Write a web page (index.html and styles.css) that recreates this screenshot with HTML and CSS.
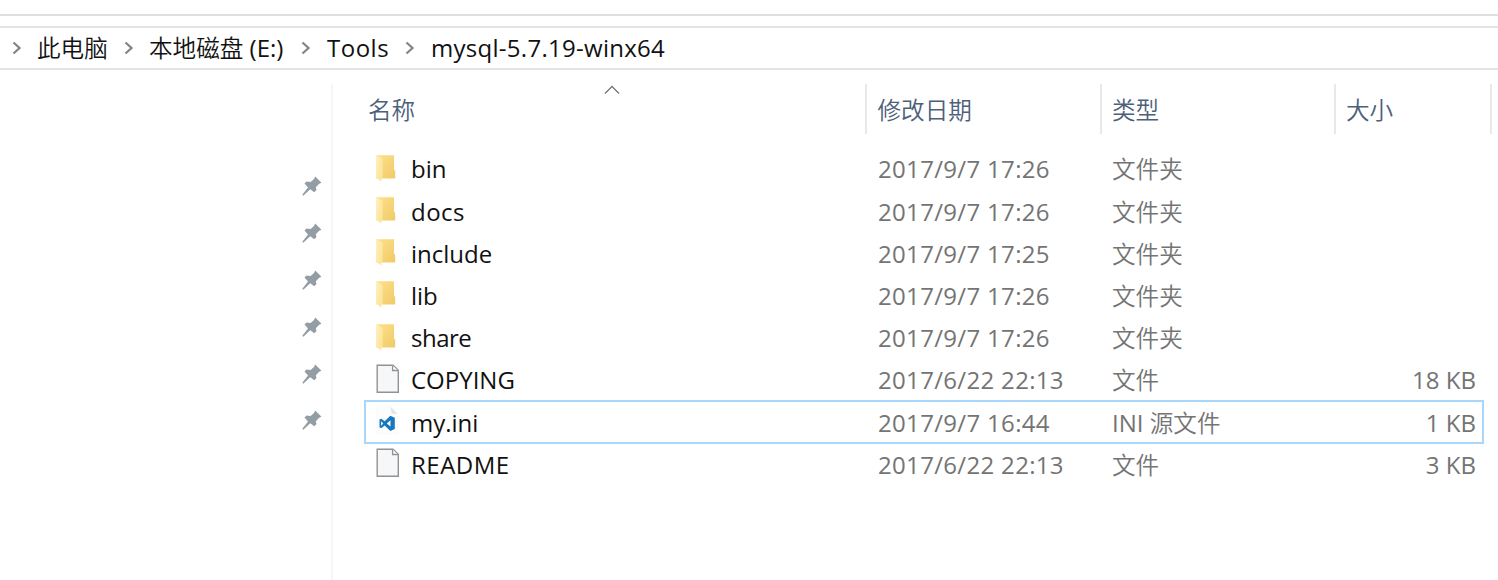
FILE: index.html
```html
<!DOCTYPE html>
<html lang="zh-CN">
<head>
<meta charset="utf-8">
<title>mysql-5.7.19-winx64</title>
<link rel="stylesheet" href="styles.css">
</head>
<body>
<svg width="0" height="0" class="defs">
  <defs>
    <linearGradient id="gold" x1="0" y1="0" x2="1" y2="1"><stop offset="0" stop-color="#ffe08a"/><stop offset="1" stop-color="#efca68"/></linearGradient>
    <linearGradient id="flap" x1="0" y1="0" x2="1" y2="1"><stop offset="0" stop-color="#fff0b8"/><stop offset="1" stop-color="#fce193"/></linearGradient>
    <symbol id="folder" viewBox="0 0 24 30"><path d="M.5 2.200H18V16.500L19.200 18V25.500H.5Z" fill="url(#gold)"/><path d="M.5 2.200L6.700 6V24.500L5.300 25.500V28.500L.5 25Z" fill="url(#flap)"/></symbol>
    <symbol id="file" viewBox="0 0 24 30"><path d="M1.200 1.300H17L22.300 6.300V28.300H1.200Z" fill="#f5f7f8" stroke="#929292" stroke-width="1.4"/><path d="M16.600 1.500V6.500H21.800" fill="#fff" stroke="#929292" stroke-width="1.3"/></symbol>
    <symbol id="code" viewBox="0 0 24 30"><path d="M.7 .7H15L21.500 7.500V28H.7Z" fill="#fdfdfd" stroke="#f8f8f8" stroke-width=".7"/><path d="M14.500 .7L21.500 7.700H15.500Z" fill="#e4e4e4"/><path fill-rule="evenodd" d="M14.300 9.800L18.800 11.700V23L14.300 25L8.700 19.500L5.200 22.200L3.500 21.300V13.500L5.200 12.700L8.700 15.300ZM14.500 14.300L10.800 17.400L14.500 20.500ZM5.100 15.200V19.700L7.200 17.400Z" fill="#1878bd"/></symbol>
    <symbol id="pin" viewBox="0 0 20 20"><path d="M13.200 .5L19.500 6.800L17.200 7.800L13.800 11.300L14.500 14L12.300 16.200L8.200 13.200L1.300 19.700L.3 18.700L6 11.500L2.500 7.500L4.500 5.400L8.700 6L12 2.900Z" fill="#939da4"/></symbol>
    <symbol id="chev" viewBox="0 0 10 14"><path d="M1.500 1.500L7.500 7L1.500 12.500" fill="none" stroke="#858585" stroke-width="2.300"/></symbol>
  </defs>
</svg>
<div class="window">
  <div class="ribbon"></div>
  <nav class="address">
    <svg class="chev"><use href="#chev"/></svg><span class="crumb c1 cjk">此电脑</span>
    <svg class="chev"><use href="#chev"/></svg><span class="crumb c2"><span class="cjk">本地磁盘</span><span class="drive"> (E:)</span></span>
    <svg class="chev"><use href="#chev"/></svg><span class="crumb c3">Tools</span>
    <svg class="chev"><use href="#chev"/></svg><span class="crumb c4">mysql-5.7.19-winx64</span>
  </nav>
  <div class="body">
    <aside class="quick">
      <svg class="pin"><use href="#pin"/></svg><svg class="pin"><use href="#pin"/></svg><svg class="pin"><use href="#pin"/></svg><svg class="pin"><use href="#pin"/></svg><svg class="pin"><use href="#pin"/></svg><svg class="pin"><use href="#pin"/></svg>
    </aside>
    <main class="list">
      <header class="head cjk">
        <span class="col">名称<svg class="sort" viewBox="0 0 16 10"><path d="M1 8.500L8 1.500L15 8.500" fill="none" stroke="#777" stroke-width="1.300"/></svg></span>
        <span class="col">修改日期</span><span class="col">类型</span><span class="col">大小</span>
      </header>
      <div class="row"><svg class="icon"><use href="#folder"/></svg><span class="name">bin</span><span class="date">2017/9/7 17:26</span><span class="cjk">文件夹</span><span class="size"></span></div>
      <div class="row"><svg class="icon"><use href="#folder"/></svg><span class="name wide">docs</span><span class="date">2017/9/7 17:26</span><span class="cjk">文件夹</span><span class="size"></span></div>
      <div class="row"><svg class="icon"><use href="#folder"/></svg><span class="name">include</span><span class="date">2017/9/7 17:25</span><span class="cjk">文件夹</span><span class="size"></span></div>
      <div class="row"><svg class="icon"><use href="#folder"/></svg><span class="name">lib</span><span class="date">2017/9/7 17:26</span><span class="cjk">文件夹</span><span class="size"></span></div>
      <div class="row"><svg class="icon"><use href="#folder"/></svg><span class="name tight">share</span><span class="date">2017/9/7 17:26</span><span class="cjk">文件夹</span><span class="size"></span></div>
      <div class="row"><svg class="icon"><use href="#file"/></svg><span class="name">COPYING</span><span class="date">2017/6/22 22:13</span><span class="cjk">文件</span><span class="size">18 KB</span></div>
      <div class="row focused"><svg class="icon"><use href="#code"/></svg><span class="name">my.ini</span><span class="date">2017/9/7 16:44</span><span><span class="ini">INI </span><span class="cjk">源文件</span></span><span class="size">1 KB</span></div>
      <div class="row"><svg class="icon"><use href="#file"/></svg><span class="name wide">README</span><span class="date">2017/6/22 22:13</span><span class="cjk">文件</span><span class="size">3 KB</span></div>
    </main>
  </div>
</div>
</body>
</html>
```
FILE: styles.css
```css
* { box-sizing: border-box; }
body { margin: 0; background: #fff; font: 24px/32px "Open Sans", "Noto Sans CJK SC", sans-serif; color: #111; overflow: hidden; }
.defs { display: block; height: 0; }
.window { height: 580px; display: flex; flex-direction: column; }
.cjk { font-family: "Noto Sans CJK SC", sans-serif; font-size: 23.6px; font-weight: 350; }
.ribbon { height: 16px; flex: none; border-bottom: 2px solid #e0e0e0; }
.address { flex: none; height: 44px; margin-top: 10px; border-top: 2px solid #e4e4e4; border-bottom: 2px solid #e4e4e4; display: flex; align-items: center; padding-left: 12px; white-space: pre; }
.chev { width: 10px; height: 14px; flex: none; }
.crumb { margin-left: 15px; flex: none; padding-bottom: 1px; }
.c1 { width: 87px; padding-bottom: 3px; }
.c2 { width: 152px; padding-bottom: 2px; }
.c3 { width: 79px; padding-left: 1px; letter-spacing: .5px; }
.c4 { padding-left: 1px; letter-spacing: .28px; }
.body { flex: 1; display: flex; padding-top: 14px; }
.quick { width: 333px; border-right: 2px solid #f6f6f6; padding: 92px 9px 0 0; display: flex; flex-direction: column; align-items: flex-end; gap: 26.9px; }
.pin { width: 20px; height: 20px; flex: none; }
.list { width: 1165px; padding-left: 31px; }
.head { display: grid; grid-template-columns: 503px 234.500px 234px 156.500px; height: 50px; margin-bottom: 14.300px; color: #4c607a; }
.col { border-right: 2px solid #e8e8e8; padding: 9px 0 0 10.500px; position: relative; }
.col:first-child { padding-left: 4px; }
.sort { position: absolute; left: 239.500px; top: 1px; width: 16px; height: 10px; }
.row { display: grid; grid-template-columns: 47px 467px 234px 235px 1fr; width: 1120px; height: 42.200px; align-items: center; color: #747474; white-space: pre; position: relative; }
.row > .cjk { padding-bottom: 2px; }
.icon { width: 24px; height: 30px; margin: -3px 0 0 12px; }
.name { color: #111; }
.wide { letter-spacing: .5px; }
.tight { letter-spacing: -.5px; }
.date { letter-spacing: .32px; }
.focused::before { content: ""; position: absolute; inset: -1px 0 0; border: 2px solid #a9d7fb; }
.size { text-align: right; padding-right: 8px; }
```
